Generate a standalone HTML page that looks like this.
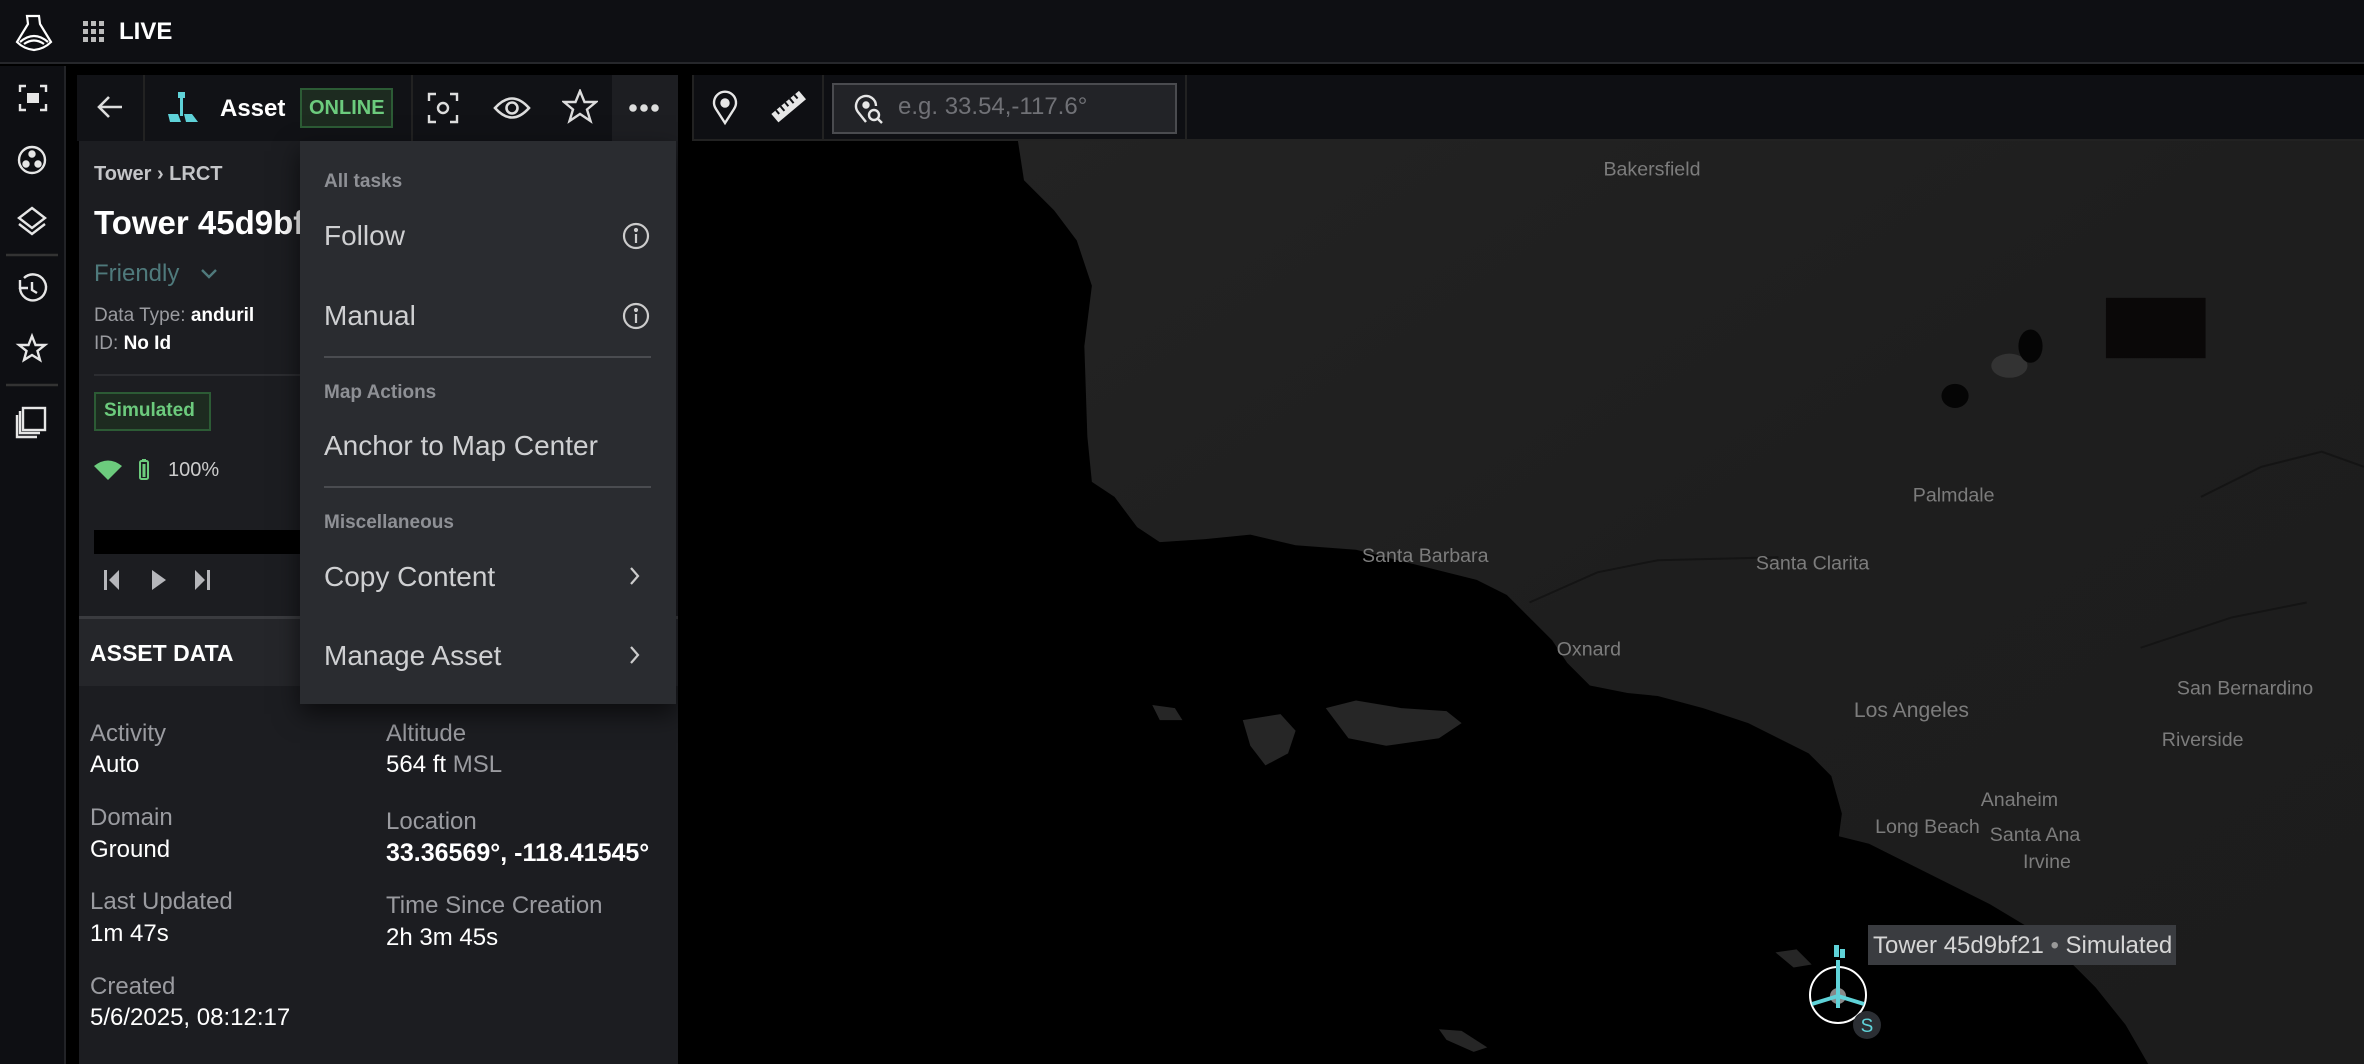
<!DOCTYPE html>
<html><head><meta charset="utf-8"><style>
*{margin:0;padding:0;box-sizing:border-box}
body{width:2364px;height:1064px;background:#000;font-family:"Liberation Sans",sans-serif;position:relative;overflow:hidden;color:#fff}
.a{position:absolute}
.t{position:absolute;white-space:nowrap;line-height:1}
.map{position:absolute;left:692px;top:141px;width:1672px;height:923px;overflow:hidden;background:#000}
.lbl{font-size:13px;fill:#7c7c7c;font-family:"Liberation Sans",sans-serif}
.mi{font-size:28px;color:#cfd0d2}
.sec{font-size:19px;color:#8e9095;font-weight:bold}
.lab{font-size:24px;color:#9a9ba0}
.val{font-size:24px;color:#fff}
</style></head><body>

<!-- map -->
<div class="map">
<svg width="1672" height="923" viewBox="460 94 1108 612" preserveAspectRatio="none">
<defs><linearGradient id="g" x1="0" y1="0" x2="1" y2="1"><stop offset="0" stop-color="#232323"/><stop offset="0.5" stop-color="#1e1e1e"/><stop offset="1" stop-color="#1c1c1c"/></linearGradient></defs>
<rect x="460" y="94" width="1108" height="612" fill="#000"/>
<polygon fill="url(#g)" points="676,94 680,120 700,140 715,160 725,190 720,230 722,290 725,320 740,330 755,350 770,360 800,358 830,355 860,362 900,365 940,375 980,385 1000,395 1015,410 1030,425 1040,440 1055,455 1080,460 1100,462 1130,470 1160,480 1180,490 1200,500 1215,515 1222,540 1220,555 1240,560 1260,570 1290,585 1320,600 1345,615 1365,630 1390,655 1410,680 1425,706 1568,706 1568,94"/>
<polygon fill="#262626" points="880,470 900,465 930,470 960,472 970,480 955,490 920,495 895,490"/>
<polygon fill="#262626" points="825,478 850,474 860,485 855,500 840,508 830,495"/>
<polygon fill="#262626" points="765,468 780,470 785,478 770,478"/>
<polygon fill="#262626" points="1178,632 1192,630 1202,640 1190,642"/>
<polygon fill="#262626" points="955,683 970,684 987,695 978,698 960,690"/>
<rect x="1397" y="198" width="66" height="40" fill="#0a0808"/>
<ellipse cx="1333" cy="243" rx="12" ry="8" fill="#333"/>
<ellipse cx="1297" cy="263" rx="9" ry="8" fill="#050505"/>
<ellipse cx="1347" cy="230" rx="8" ry="11" fill="#050505"/>
<g fill="none" stroke="#141414" stroke-width="1.3">
<path d="M1015,400 L1060,380 1100,372 1180,370"/>
<path d="M1460,330 L1500,310 1540,300 1568,310"/>
<path d="M1420,430 L1480,410 1530,400"/>
</g>
<text class="lbl" x="1064" y="117">Bakersfield</text>
<text class="lbl" x="1269" y="333">Palmdale</text>
<text class="lbl" x="904" y="373">Santa Barbara</text>
<text class="lbl" x="1165" y="378">Santa Clarita</text>
<text class="lbl" x="1033" y="435">Oxnard</text>
<text class="lbl" x="1230" y="476" style="font-size:14px">Los Angeles</text>
<text class="lbl" x="1444" y="461">San Bernardino</text>
<text class="lbl" x="1434" y="495">Riverside</text>
<text class="lbl" x="1314" y="535">Anaheim</text>
<text class="lbl" x="1244" y="553">Long Beach</text>
<text class="lbl" x="1320" y="558">Santa Ana</text>
<text class="lbl" x="1342" y="576">Irvine</text>
</svg>
</div>

<!-- marker -->
<svg class="a" style="left:1800px;top:940px" width="100" height="124" viewBox="0 0 100 124">
<circle cx="38" cy="55" r="28" fill="none" stroke="#fff" stroke-width="2"/>
<circle cx="38" cy="56" r="8" fill="#888"/>
<g fill="#5fd2d8" stroke="#5fd2d8" stroke-width="4">
<line x1="38" y1="20" x2="38" y2="68"/><line x1="38" y1="56" x2="12" y2="64"/><line x1="38" y1="56" x2="64" y2="64"/>
</g>
<rect x="34" y="5" width="5" height="12" fill="#5fd2d8"/><rect x="40" y="9" width="5" height="9" fill="#5fd2d8"/>
<circle cx="67" cy="85" r="14" fill="#2b2e33"/>
<text x="67" y="92" text-anchor="middle" font-size="19" fill="#5fd2d8" font-family="Liberation Sans">S</text>
</svg>
<div class="a" style="left:1868px;top:925px;width:308px;height:40px;background:#3a3c40"></div>
<div class="t" style="left:1873px;top:934px;font-size:24px;color:#d6d6d6">Tower 45d9bf21 <span style="color:#999">•</span> Simulated</div>

<!-- top bar -->
<div class="a" style="left:0;top:0;width:2364px;height:64px;background:#0e0f13;border-bottom:2px solid #26272b"></div>
<svg class="a" style="left:14px;top:12px" width="40" height="40" viewBox="0 0 40 40" fill="none" stroke="#fff" stroke-width="2.2">
<path d="M13,4 L25,4 L26,12 L37,30 Q30,37 20,38 Q10,37 3,30 L14,12 Z"/><path d="M6,30 Q20,18 34,30"/><path d="M10,32 Q20,25 30,32"/></svg>
<svg class="a" style="left:83px;top:21px" width="22" height="22" viewBox="0 0 22 22" fill="#bbb">
<rect x="0" y="0" width="5" height="5"/><rect x="8" y="0" width="5" height="5"/><rect x="16" y="0" width="5" height="5"/>
<rect x="0" y="8" width="5" height="5"/><rect x="8" y="8" width="5" height="5"/><rect x="16" y="8" width="5" height="5"/>
<rect x="0" y="16" width="5" height="5"/><rect x="8" y="16" width="5" height="5"/><rect x="16" y="16" width="5" height="5"/></svg>
<div class="t" style="left:119px;top:20px;font-size:24px;font-weight:bold">LIVE</div>

<!-- left rail -->
<div class="a" style="left:0;top:66px;width:66px;height:998px;background:#0e0f13;border-right:2px solid #222327"></div>
<svg class="a" style="left:0;top:66px" width="66" height="400" fill="none" stroke="#e6e6e6" stroke-width="2.4">
<path d="M20,26v-6h6M40,20h6v6M46,38v6h-6M26,44h-6v-6"/><rect x="27" y="27" width="12" height="10" fill="#e6e6e6" stroke="none"/>
<circle cx="32" cy="94" r="13"/><circle cx="32" cy="88" r="2.5" fill="#e6e6e6"/><circle cx="26" cy="98" r="2.5" fill="#e6e6e6"/><circle cx="38" cy="98" r="2.5" fill="#e6e6e6"/>
<path d="M32,142 L45,152 L32,162 L19,152 Z"/><path d="M19,158 L32,168 L45,158"/>
<line x1="6" y1="189" x2="58" y2="189" stroke="#333"/>
<path d="M20,222 A13,13 0 1 0 24,212"/><path d="M20,214 L20,222 L28,222" /><path d="M32,216 L32,224 L37,227"/>
<path d="M32,270 L35.5,279 L45,279 L37.5,285 L40,294 L32,289 L24,294 L26.5,285 L19,279 L28.5,279 Z"/>
<line x1="6" y1="319" x2="58" y2="319" stroke="#333"/>
<rect x="23" y="342" width="22" height="22"/><path d="M20,345 V367 H40"/><path d="M17,349 V371 H37"/>
</svg>

<!-- panel -->
<div class="a" style="left:77px;top:75px;width:603px;height:989px;background:#1c1d21;border-left:2px solid #000;border-right:2px solid #000"></div>
<div class="a" style="left:77px;top:75px;width:601px;height:66px;background:#111216"></div>
<div class="a" style="left:143px;top:75px;width:2px;height:66px;background:#222"></div>
<div class="a" style="left:411px;top:75px;width:2px;height:66px;background:#222"></div>
<div class="a" style="left:612px;top:75px;width:66px;height:66px;background:#1d1e22"></div>
<svg class="a" style="left:95px;top:92px" width="30" height="30" fill="none" stroke="#ddd" stroke-width="2.6"><path d="M27,15H4M14,5L4,15L14,25"/></svg>
<svg class="a" style="left:166px;top:92px" width="34" height="32"><rect x="12" y="0" width="7" height="6" fill="#5fd2d8"/><rect x="14" y="6" width="3" height="18" fill="#5fd2d8"/><path d="M2,22 L12,22 L15,30 L4,30Z M18,22 L26,22 L32,30 L20,30Z" fill="#5fd2d8"/></svg>
<div class="t" style="left:220px;top:97px;font-size:24px;font-weight:bold">Asset</div>
<div class="a" style="left:300px;top:88px;width:93px;height:40px;background:#1d2b20;border:2px solid #2c5b35"></div>
<div class="t" style="left:309px;top:98px;font-size:20px;font-weight:bold;color:#6ccb7d">ONLINE</div>
<svg class="a" style="left:427px;top:92px" width="32" height="32" fill="none" stroke="#ddd" stroke-width="2.4"><path d="M2,9V2H9M23,2H30V9M30,23V30H23M9,30H2V23"/><circle cx="16" cy="16" r="5"/></svg>
<svg class="a" style="left:493px;top:95px" width="38" height="26" fill="none" stroke="#ddd" stroke-width="2.6"><path d="M2,13 Q19,-6 36,13 Q19,32 2,13Z"/><circle cx="19" cy="13" r="5.5"/></svg>
<svg class="a" style="left:562px;top:89px" width="36" height="36" fill="none" stroke="#ddd" stroke-width="2.4"><path d="M18,2 L22.5,13 L34,13 L25,20.5 L28.5,32 L18,25 L7.5,32 L11,20.5 L2,13 L13.5,13 Z"/></svg>
<svg class="a" style="left:629px;top:103px" width="30" height="10" fill="#ddd"><circle cx="4" cy="5" r="3.8"/><circle cx="15" cy="5" r="3.8"/><circle cx="26" cy="5" r="3.8"/></svg>

<div class="t" style="left:94px;top:164px;font-size:20px;font-weight:bold;color:#c4c5c8">Tower › LRCT</div>
<div class="t" style="left:94px;top:206px;font-size:33px;font-weight:bold">Tower 45d9bf21</div>
<div class="t" style="left:94px;top:262px;font-size:24px;color:#4f7a7c">Friendly</div>
<svg class="a" style="left:199px;top:267px" width="20" height="14" fill="none" stroke="#4f7a7c" stroke-width="2.4"><path d="M3,3 L10,10 L17,3"/></svg>
<div class="t" style="left:94px;top:306px;font-size:19px;color:#9a9ba0">Data Type: <b style="color:#fff">anduril</b></div>
<div class="t" style="left:94px;top:334px;font-size:19px;color:#9a9ba0">ID: <b style="color:#fff">No Id</b></div>
<div class="a" style="left:94px;top:374px;width:210px;height:2px;background:#2c2d31"></div>
<div class="a" style="left:94px;top:392px;width:117px;height:39px;background:#1d2b20;border:2px solid #2c5b35"></div>
<div class="t" style="left:104px;top:401px;font-size:19px;font-weight:bold;color:#6ccb7d">Simulated</div>
<svg class="a" style="left:94px;top:458px" width="60" height="24"><path d="M0,8 Q14,-3 28,8 L14,22Z" fill="#6ccb7d"/><rect x="46" y="3" width="8" height="18" rx="1.5" fill="none" stroke="#6ccb7d" stroke-width="2"/><rect x="48.5" y="6" width="3" height="13" fill="#6ccb7d"/><rect x="48" y="1" width="4" height="2" fill="#6ccb7d"/></svg>
<div class="t" style="left:168px;top:460px;font-size:20px;color:#ccc">100%</div>
<div class="a" style="left:94px;top:530px;width:210px;height:24px;background:#000"></div>
<svg class="a" style="left:104px;top:570px" width="120" height="22" fill="#b5b6ba"><rect x="0" y="0" width="3" height="20"/><path d="M5,10 L15,0 V20Z"/><path d="M48,0 L62,10 L48,20Z"/><path d="M91,0 L101,10 L91,20Z"/><rect x="103" y="0" width="3" height="20"/></svg>
<div class="a" style="left:79px;top:616px;width:599px;height:3px;background:#3a3b3f"></div>
<div class="a" style="left:79px;top:619px;width:599px;height:67px;background:#25262a"></div>
<div class="t" style="left:90px;top:642px;font-size:23px;font-weight:bold">ASSET DATA</div>

<div class="t lab" style="left:90px;top:722px">Activity</div><div class="t val" style="left:90px;top:753px">Auto</div>
<div class="t lab" style="left:90px;top:806px">Domain</div><div class="t val" style="left:90px;top:838px">Ground</div>
<div class="t lab" style="left:90px;top:890px">Last Updated</div><div class="t val" style="left:90px;top:922px">1m 47s</div>
<div class="t lab" style="left:90px;top:975px">Created</div><div class="t val" style="left:90px;top:1006px">5/6/2025, 08:12:17</div>
<div class="t lab" style="left:386px;top:722px">Altitude</div><div class="t val" style="left:386px;top:753px">564 ft <span style="color:#9a9ba0">MSL</span></div>
<div class="t lab" style="left:386px;top:810px">Location</div><div class="t val" style="left:386px;top:841px;font-weight:bold;font-size:25px">33.36569°, -118.41545°</div>
<div class="t lab" style="left:386px;top:894px">Time Since Creation</div><div class="t val" style="left:386px;top:926px">2h 3m 45s</div>

<!-- menu -->
<div class="a" style="left:300px;top:141px;width:376px;height:563px;background:#2a2c30;box-shadow:0 10px 24px rgba(0,0,0,.6)"></div>
<div class="t sec" style="left:324px;top:172px">All tasks</div>
<div class="t mi" style="left:324px;top:222px">Follow</div>
<div class="t mi" style="left:324px;top:302px">Manual</div>
<svg class="a" style="left:622px;top:222px" width="28" height="108" fill="none" stroke="#ccc" stroke-width="2.2"><circle cx="14" cy="14" r="12"/><line x1="14" y1="12" x2="14" y2="21"/><circle cx="14" cy="8" r="1" fill="#ccc"/><circle cx="14" cy="94" r="12"/><line x1="14" y1="92" x2="14" y2="101"/><circle cx="14" cy="88" r="1" fill="#ccc"/></svg>
<div class="a" style="left:324px;top:356px;width:327px;height:2px;background:#4a4c50"></div>
<div class="t sec" style="left:324px;top:383px">Map Actions</div>
<div class="t mi" style="left:324px;top:432px">Anchor to Map Center</div>
<div class="a" style="left:324px;top:486px;width:327px;height:2px;background:#4a4c50"></div>
<div class="t sec" style="left:324px;top:513px">Miscellaneous</div>
<div class="t mi" style="left:324px;top:563px">Copy Content</div>
<div class="t mi" style="left:324px;top:642px">Manage Asset</div>
<svg class="a" style="left:628px;top:566px" width="14" height="100" fill="none" stroke="#ccc" stroke-width="2.2"><path d="M3,2 L10,10 L3,18"/><path d="M3,81 L10,89 L3,97"/></svg>

<!-- map toolbar -->
<div class="a" style="left:692px;top:75px;width:1672px;height:66px;background:#0e0f13;border-left:2px solid #222;border-bottom:2px solid #222"></div>
<div class="a" style="left:822px;top:75px;width:2px;height:66px;background:#222"></div>
<div class="a" style="left:1185px;top:75px;width:2px;height:66px;background:#222"></div>
<svg class="a" style="left:712px;top:90px" width="26" height="36" fill="none" stroke="#e6e6e6" stroke-width="2.4"><path d="M13,33 L4,19 A11,11 0 1 1 22,19 Z"/><circle cx="13" cy="13" r="3.5" fill="#e6e6e6"/></svg>
<svg class="a" style="left:770px;top:88px" width="38" height="38"><g transform="rotate(-40 19 19)"><rect x="1" y="13" width="36" height="11" fill="#e6e6e6"/><g fill="#0e0f13"><rect x="6" y="13" width="2" height="5"/><rect x="12" y="13" width="2" height="6"/><rect x="18" y="13" width="2" height="5"/><rect x="24" y="13" width="2" height="6"/><rect x="30" y="13" width="2" height="5"/></g></g></svg>
<div class="a" style="left:832px;top:83px;width:345px;height:51px;background:#222327;border:2px solid #4a4b4f"></div>
<svg class="a" style="left:854px;top:94px" width="30" height="32" fill="none" stroke="#e6e6e6" stroke-width="2.4"><path d="M12,28 L4,18 A10,10 0 1 1 22,12"/><circle cx="12" cy="11" r="2.5" fill="#e6e6e6"/><circle cx="20" cy="21" r="5"/><path d="M24,25 L28,29"/></svg>
<div class="t" style="left:898px;top:95px;font-size:24px;color:#707176">e.g. 33.54,-117.6°</div>
</body></html>
